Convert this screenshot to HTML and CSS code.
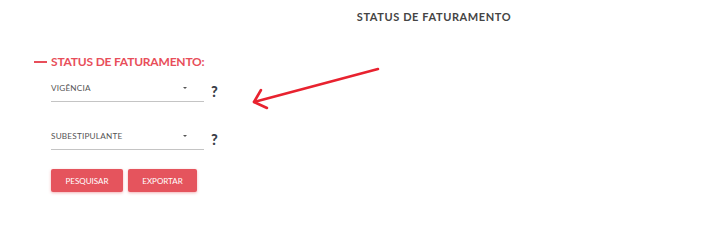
FILE: index.html
```html
<!DOCTYPE html>
<html lang="pt">
<head>
<meta charset="utf-8">
<link rel="stylesheet" href="styles.css">
</head>
<body>
<div class="page">
  <header class="top">
    <h1 class="page-title">STATUS DE FATURAMENTO</h1>
  </header>
  <section class="panel">
    <h2 class="panel-title"><span class="dash"></span>STATUS DE FATURAMENTO:</h2>
    <div class="fields">
      <div class="field-row">
        <div class="select"><span class="select-label">VIGÊNCIA</span><span class="caret"></span></div>
        <span class="help">?</span>
      </div>
      <div class="field-row">
        <div class="select"><span class="select-label">SUBESTIPULANTE</span><span class="caret"></span></div>
        <span class="help">?</span>
      </div>
      <div class="actions">
        <button class="btn btn-search">PESQUISAR</button>
        <button class="btn btn-export">EXPORTAR</button>
      </div>
    </div>
  </section>
  <svg class="annotation" width="140" height="50" viewBox="0 0 140 50">
    <path d="M136 9 L12 42" stroke="#e8222f" stroke-width="2.6" stroke-linecap="round" fill="none"/>
    <path d="M19 30 L12 42 L25 48" stroke="#e8222f" stroke-width="2.6" stroke-linecap="round" stroke-linejoin="round" fill="none"/>
  </svg>
</div>
</body>
</html>
```
FILE: styles.css
```css
* { box-sizing: border-box; }
html, body { margin: 0; padding: 0; background: #fff; }
body { font-family: "Lato", "Liberation Sans", sans-serif; }
.page { position: relative; width: 713px; height: 235px; }
.top { margin-left: 155px; padding-top: 10px; text-align: center; }
.page-title { margin: 0; font-size: 11px; font-weight: 700; color: #444; letter-spacing: 0.6px; line-height: 14px; }
.panel { padding-left: 34px; padding-top: 31px; }
.panel-title { margin: 0; display: flex; align-items: center; font-size: 12px; font-weight: 700; color: #e84e5a; line-height: 14px; letter-spacing: -0.2px; }
.dash { display: inline-block; width: 13px; height: 2px; background: #e84e5a; margin-right: 4px; }
.fields { padding-left: 17px; padding-top: 12px; }
.field-row { display: flex; align-items: flex-end; margin-bottom: 27px; }
.select { width: 153px; height: 21px; border-bottom: 1.5px solid #c4c4c4; display: flex; justify-content: space-between; align-items: flex-start; padding-top: 2px; }
.select-label { font-size: 8.2px; color: #555; letter-spacing: 0.2px; }
.caret { width: 0; height: 0; border-left: 2px solid transparent; border-right: 2px solid transparent; border-top: 2px solid #555; margin-top: 4px; margin-right: 17px; }
.help { font-size: 14.5px; font-weight: 900; color: #3a3f4a; margin-left: 7px; line-height: 12px; margin-bottom: 4px; }
.actions { display: flex; gap: 5px; margin-top: -8px; }
.btn { height: 23px; border: none; border-radius: 2px; background: #e5545d; color: #fff; font-family: inherit; font-size: 8px; letter-spacing: 0; box-shadow: 0 1px 3px rgba(229,84,93,0.45); padding: 0; }
.btn-search { width: 72px; }
.btn-export { width: 69px; }
.annotation { position: absolute; left: 242px; top: 60px; }
```
